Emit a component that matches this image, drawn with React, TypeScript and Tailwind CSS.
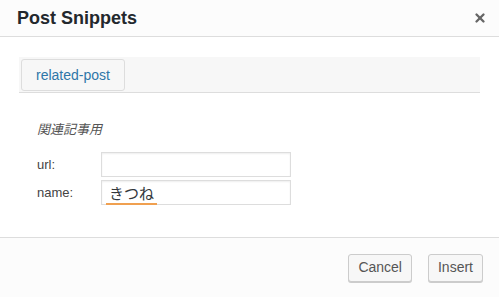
import { X } from 'lucide-react'

function Field({ label, value }: { label: string; value?: string }) {
  return (
    <div className="flex items-center h-[26px]">
      <label className="w-[64px] text-[13px] text-[#444]">{label}</label>
      <div className="relative w-[190px] h-[25px] border border-[#ddd] bg-white shadow-[inset_0_1px_2px_rgba(0,0,0,0.07)] flex items-center pl-[7px]">
        {value && (
          <span className="relative text-[15px] leading-none text-[#32373c] [font-family:'Noto_Sans_CJK_JP',sans-serif]">
            {value}
            <span className="absolute left-[-3px] right-[-3px] bottom-[-5px] h-[2px] bg-[#f0a050]" />
          </span>
        )}
      </div>
    </div>
  )
}

export default function App() {
  return (
    <div className="w-[499px] h-[297px] bg-white flex flex-col [font-family:'Liberation_Sans',Arial,sans-serif] text-[#444]">
      <div className="h-[37px] shrink-0 bg-[#fcfcfc] border-b border-[#dddddd] flex items-center justify-between pl-[17px] pr-[12px]">
        <h1 className="text-[18px] font-bold text-[#23282d]">Post Snippets</h1>
        <X size={14} strokeWidth={4} className="text-[#666]" />
      </div>

      <div className="flex-1 px-[19px] pt-[20px]">
        <div className="h-[36px] bg-[#f7f7f7] border-b border-[#dddddd] pl-[2px] pt-[2px]">
          <button className="h-[32px] px-[14px] border border-[#dddddd] rounded-[3px] bg-[#f7f7f7] text-[14px] text-[#2e76a8]">
            related-post
          </button>
        </div>

        <div className="pl-[18px] pt-[26px]">
          <p className="text-[13px] italic text-[#555] [font-family:'Noto_Sans_CJK_JP',sans-serif]">関連記事用</p>
          <div className="mt-[13px] flex flex-col gap-[2px]">
            <Field label="url:" />
            <Field label="name:" value="きつね" />
          </div>
        </div>
      </div>

      <div className="h-[60px] shrink-0 bg-[#fcfcfc] border-t border-[#dddddd] flex items-center justify-end gap-[16px] pr-[16px]">
        <button className="h-[28px] px-[9px] border border-[#cccccc] rounded-[3px] bg-[#f7f7f7] shadow-[0_1px_0_#ccc] text-[14px] text-[#555]">
          Cancel
        </button>
        <button className="h-[28px] px-[9px] border border-[#cccccc] rounded-[3px] bg-[#f7f7f7] shadow-[0_1px_0_#ccc] text-[14px] text-[#555]">
          Insert
        </button>
      </div>
    </div>
  )
}
